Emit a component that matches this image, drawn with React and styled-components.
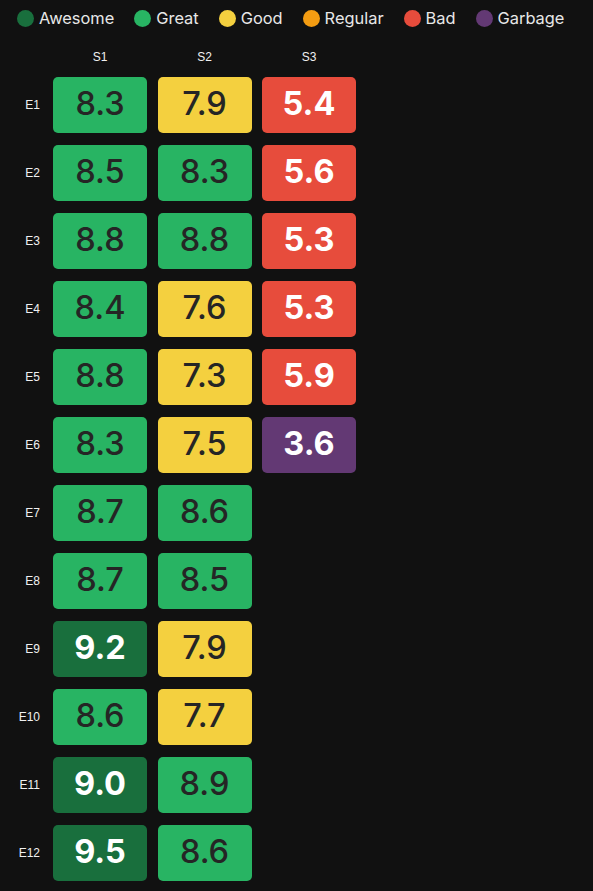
import React from "react";
import styled, { createGlobalStyle } from "styled-components";

const Global = createGlobalStyle`
  html, body { margin: 0; padding: 0; background: #111111; }
  body { font-family: Inter, "Noto Sans", sans-serif; color: #eeeeee; }
`;

const COLORS = {
  awesome: "#196f3d",
  great: "#28b463",
  good: "#f4d03f",
  regular: "#f39c12",
  bad: "#e74c3c",
  garbage: "#633974",
};

const LIGHT = { awesome: true, bad: true, garbage: true };

const levelOf = (v) => {
  if (v >= 9) return "awesome";
  if (v >= 8) return "great";
  if (v >= 7) return "good";
  if (v >= 6) return "regular";
  if (v >= 5) return "bad";
  return "garbage";
};

const Page = styled.div`
  padding: 8px 0 10px 0;
`;

const Legend = styled.div`
  display: flex;
  align-items: center;
  gap: 20px;
  padding-left: 17px;
  height: 20px;
`;

const LegendItem = styled.div`
  display: flex;
  align-items: center;
  gap: 5px;
  font-size: 16.4px;
  color: #e8e8e8;
`;

const Dot = styled.span`
  width: 17px;
  height: 17px;
  border-radius: 50%;
  background: ${(p) => p.$color};
  flex: none;
`;

const Grid = styled.div`
  display: grid;
  grid-template-columns: 42.5px repeat(3, 94px);
  column-gap: 10.5px;
  row-gap: 12.4px;
  margin-top: 20px;
`;

const HeadCell = styled.div`
  font-family: "Liberation Sans", Arial, sans-serif;
  font-size: 12px;
  color: #f0f0f0;
  text-align: center;
  height: 18px;
  line-height: 18px;
  margin-bottom: -1px;
`;

const RowLabel = styled.div`
  font-family: "Liberation Sans", Arial, sans-serif;
  font-size: 12px;
  color: #f0f0f0;
  display: flex;
  align-items: center;
  justify-content: flex-end;
  padding-right: 2.5px;
`;

const Score = styled.div`
  height: 55.6px;
  border-radius: 5px;
  background: ${(p) => COLORS[p.$level]};
  color: ${(p) => (LIGHT[p.$level] ? "#ffffff" : "#252525")};
  font-weight: ${(p) => (LIGHT[p.$level] ? 700 : 500)};
  font-size: 32.5px;
  display: flex;
  align-items: center;
  justify-content: center;
  padding-bottom: 4px;
  box-sizing: border-box;
`;

const Empty = styled.div``;

const legend = [
  ["awesome", "Awesome"],
  ["great", "Great"],
  ["good", "Good"],
  ["regular", "Regular"],
  ["bad", "Bad"],
  ["garbage", "Garbage"],
];

const rows = [
  ["8.3", "7.9", "5.4"],
  ["8.5", "8.3", "5.6"],
  ["8.8", "8.8", "5.3"],
  ["8.4", "7.6", "5.3"],
  ["8.8", "7.3", "5.9"],
  ["8.3", "7.5", "3.6"],
  ["8.7", "8.6"],
  ["8.7", "8.5"],
  ["9.2", "7.9"],
  ["8.6", "7.7"],
  ["9.0", "8.9"],
  ["9.5", "8.6"],
];

export default function App() {
  return (
    <Page>
      <Global />
      <Legend>
        {legend.map(([k, label]) => (
          <LegendItem key={k}>
            <Dot $color={COLORS[k]} />
            {label}
          </LegendItem>
        ))}
      </Legend>
      <Grid>
        <Empty />
        <HeadCell>S1</HeadCell>
        <HeadCell>S2</HeadCell>
        <HeadCell>S3</HeadCell>
        {rows.map((r, i) => (
          <React.Fragment key={i}>
            <RowLabel>E{i + 1}</RowLabel>
            {[0, 1, 2].map((j) =>
              r[j] ? (
                <Score key={j} $level={levelOf(parseFloat(r[j]))}>
                  {r[j]}
                </Score>
              ) : (
                <Empty key={j} />
              )
            )}
          </React.Fragment>
        ))}
      </Grid>
    </Page>
  );
}
